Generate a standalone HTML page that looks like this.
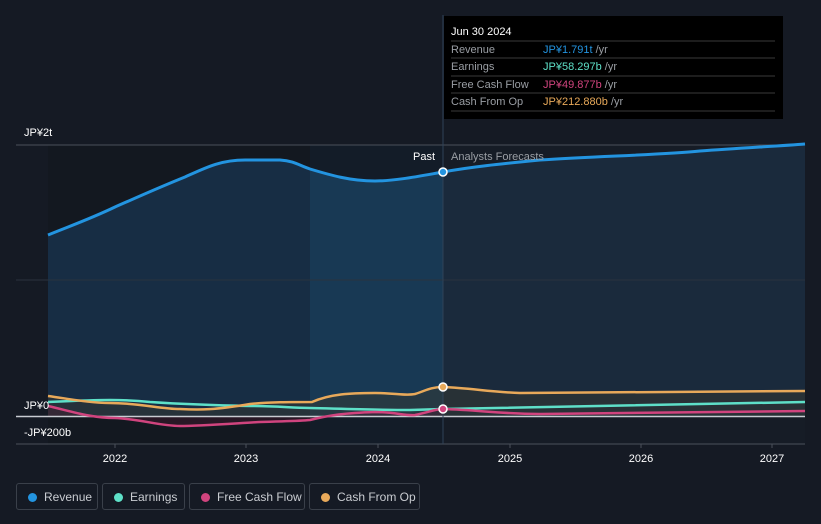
<!DOCTYPE html>
<html><head><meta charset="utf-8"><style>
html,body{margin:0;padding:0;background:#151a24;width:821px;height:524px;overflow:hidden;font-family:"Liberation Sans","Noto Sans CJK JP",sans-serif}
svg{position:absolute;left:0;top:0}
.leg{position:absolute;top:483px;height:27px;border:1px solid #3a404a;border-radius:3px;color:#c9ccd1;font-size:12px;line-height:27px;box-sizing:border-box}
.leg i{position:absolute;left:11px;top:9px;width:9px;height:9px;border-radius:50%}
.leg span{position:absolute;left:27px;top:0}
</style></head><body>
<svg width="821" height="524" viewBox="0 0 821 524">
<defs>
<clipPath id="rc"><path d="M48,235 C70,226 90,219 115,207 C140,196 160,187 185,177 C205,168 220,160 245,160 L280,160 C295,161 300,166 310,169 C330,175 350,181 375,181 C395,181 420,176 443,172 C470,167 500,164 540,160 C600,156 660,155 700,151 C740,148 780,146 805,144 L805,416 L48,416 Z"/></clipPath>
</defs>
<rect x="48" y="145" width="262" height="300" fill="#131820"/>
<rect x="310" y="145" width="133" height="300" fill="#131c28"/>
<rect x="443" y="145" width="362" height="300" fill="#161c26"/>
<g clip-path="url(#rc)">
<rect x="48" y="140" width="262" height="280" fill="#172d44"/>
<rect x="310" y="140" width="133" height="280" fill="#183954"/>
<rect x="443" y="140" width="362" height="280" fill="#1a2a3c"/>
</g>
<line x1="16" y1="145" x2="805" y2="145" stroke="#4a505a" stroke-width="1"/>
<line x1="16" y1="280" x2="805" y2="280" stroke="#2a323e" stroke-width="1"/>
<path d="M48,396 C70,399 90,403 110,403 C140,403 160,409 180,409 C200,410 215,410 250,404 C270,402 290,402 312,402 C330,394 350,393 375,393 C395,393 405,396 415,394 C425,391 430,387 443,387 C470,388 490,392 520,393 L805,391 L805,416 L48,416Z" fill="#3a3a2e" opacity="0.45"/>
<path d="M48,406 C70,411 90,418 115,418 C140,419 160,426 180,426 C200,426 240,423 260,422 C290,421 300,421 310,420 C330,415 345,413 375,412 C395,412 410,417 443,409 L443,416 L48,416Z" fill="#4a1a30" opacity="0.4"/>
<line x1="16" y1="416.5" x2="805" y2="416.5" stroke="#c8ccd2" stroke-width="1.5"/>
<line x1="16" y1="444" x2="805" y2="444" stroke="#4a505a" stroke-width="1"/>
<line x1="443" y1="15" x2="443" y2="444" stroke="#2f4258" stroke-width="1"/>
<path d="M48,235 C70,226 90,219 115,207 C140,196 160,187 185,177 C205,168 220,160 245,160 L280,160 C295,161 300,166 310,169 C330,175 350,181 375,181 C395,181 420,176 443,172 C470,167 500,164 540,160 C600,156 660,155 700,151 C740,148 780,146 805,144" fill="none" stroke="#2394e0" stroke-width="3"/>
<path d="M48,402 C70,401 90,400 110,400 C130,400 140,401 150,402 C180,404 200,405 250,406 C280,406 290,408 310,408 C350,409 380,410 410,410 L443,409 C500,407 600,405 805,402" fill="none" stroke="#5ee0c8" stroke-width="2.5"/>
<path d="M48,406 C70,411 90,418 115,418 C140,419 160,426 180,426 C200,426 240,423 260,422 C290,421 300,421 310,420 C330,415 345,413 375,412 C395,412 405,416 415,415 C430,412 435,409 443,409 C480,410 500,414 540,414 L805,411" fill="none" stroke="#d0447e" stroke-width="2.5"/>
<path d="M48,396 C70,399 90,403 110,403 C140,403 160,409 180,409 C200,410 215,410 250,404 C270,402 290,402 312,402 C330,394 350,393 375,393 C395,393 405,396 415,394 C425,391 430,387 443,387 C470,388 490,392 520,393 L805,391" fill="none" stroke="#e8a95a" stroke-width="2.5"/>
<circle cx="443" cy="172" r="4" fill="#2394e0" stroke="#fff" stroke-width="1.5"/>
<circle cx="443" cy="387" r="4" fill="#e8a95a" stroke="#fff" stroke-width="1.5"/>
<circle cx="443" cy="409" r="4" fill="#d0447e" stroke="#fff" stroke-width="1.5"/>
<rect x="444" y="16" width="339" height="103" fill="#000"/>
<g font-size="11">
<text x="451" y="35" fill="#fff">Jun 30 2024</text>
<line x1="451" y1="41" x2="775" y2="41" stroke="#3a3a3a"/>
<text x="451" y="53" fill="#9a9ea4">Revenue</text><text x="543" y="53" fill="#2394e0">JP¥1.791t <tspan fill="#9a9ea4">/yr</tspan></text>
<line x1="451" y1="58" x2="775" y2="58" stroke="#3a3a3a"/>
<text x="451" y="70" fill="#9a9ea4">Earnings</text><text x="543" y="70" fill="#5ee0c8">JP¥58.297b <tspan fill="#9a9ea4">/yr</tspan></text>
<line x1="451" y1="76" x2="775" y2="76" stroke="#3a3a3a"/>
<text x="451" y="88" fill="#9a9ea4">Free Cash Flow</text><text x="543" y="88" fill="#d0447e">JP¥49.877b <tspan fill="#9a9ea4">/yr</tspan></text>
<line x1="451" y1="93" x2="775" y2="93" stroke="#3a3a3a"/>
<text x="451" y="105" fill="#9a9ea4">Cash From Op</text><text x="543" y="105" fill="#e8a95a">JP¥212.880b <tspan fill="#9a9ea4">/yr</tspan></text>
<line x1="451" y1="111" x2="775" y2="111" stroke="#3a3a3a"/>
<text x="24" y="136" fill="#fff">JP¥2t</text>
<text x="24" y="409" fill="#fff">JP¥0</text>
<text x="24" y="436" fill="#fff">-JP¥200b</text>
<text x="435" y="160" fill="#fff" text-anchor="end">Past</text>
<text x="451" y="160" fill="#9a9ea4">Analysts Forecasts</text>
<g fill="#fff" text-anchor="middle">
<text x="115" y="462">2022</text><text x="246" y="462">2023</text><text x="378" y="462">2024</text><text x="510" y="462">2025</text><text x="641" y="462">2026</text><text x="772" y="462">2027</text>
</g></g>
<g stroke="#4a505a"><line x1="115" y1="444" x2="115" y2="448"/><line x1="246" y1="444" x2="246" y2="448"/><line x1="378" y1="444" x2="378" y2="448"/><line x1="510" y1="444" x2="510" y2="448"/><line x1="641" y1="444" x2="641" y2="448"/><line x1="772" y1="444" x2="772" y2="448"/></g>
</svg>
<div class="leg" style="left:16px;width:82px"><i style="background:#2394e0"></i><span>Revenue</span></div>
<div class="leg" style="left:102px;width:83px"><i style="background:#5ee0c8"></i><span>Earnings</span></div>
<div class="leg" style="left:189px;width:116px"><i style="background:#d0447e"></i><span>Free Cash Flow</span></div>
<div class="leg" style="left:309px;width:111px"><i style="background:#e8a95a"></i><span>Cash From Op</span></div>
</body></html>
